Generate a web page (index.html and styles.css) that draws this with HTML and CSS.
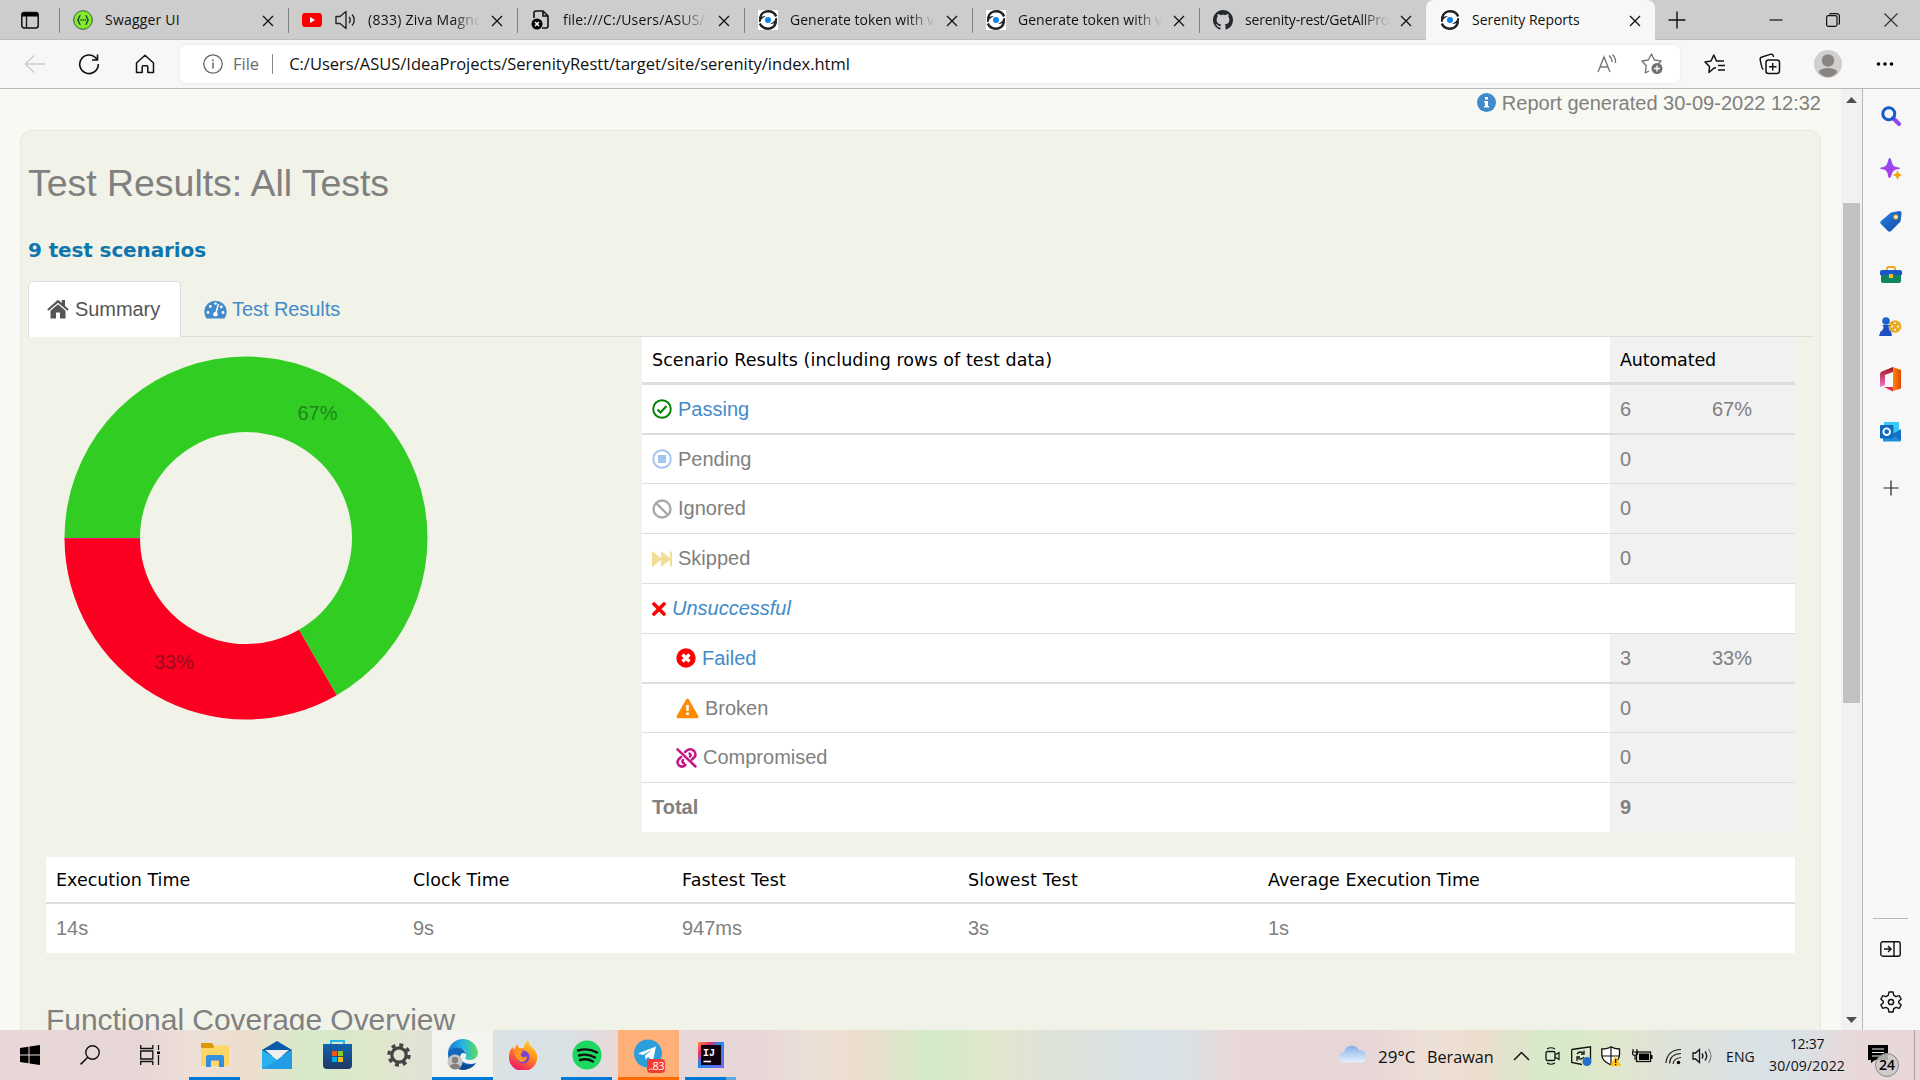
FILE: index.html
```html
<!DOCTYPE html>
<html lang="en">
<head>
<meta charset="utf-8">
<title>Serenity Reports</title>
<link rel="stylesheet" href="styles.css">
</head>
<body>
<svg class="defs" width="0" height="0">
  <defs>
    <symbol id="close" viewBox="0 0 12 12"><path d="M1 1L11 11M11 1L1 11" fill="none" stroke="#111" stroke-width="1.3"/></symbol>
    <symbol id="serenity" viewBox="0 0 20 20"><path d="M0 0H20V20H0Z" fill="#fff"/><path d="M2 8C3 3 7 1.3 10 1.3C14 1.3 16.800 3.300 18.200 6.500" fill="none" stroke="#222" stroke-width="2.500"/><path d="M18 12C17 17 13 18.700 10 18.700C6 18.700 3.200 16.700 1.800 13.500" fill="none" stroke="#222" stroke-width="2.500"/><path d="M1 12V8.500C3 6.300 6 6 8 6.200L4.500 8.300C3.500 9 3 10.500 2.500 12ZM19 8V11.500C17 13.700 14 14 12 13.800L15.500 11.700C16.500 11 17 9.500 17.500 8Z" fill="#222"/><circle cx="10" cy="10" r="3" fill="#0a84e8"/></symbol>
    <linearGradient id="blue" x2="1" y2="1"><stop stop-color="#2385e2"/><stop offset="1" stop-color="#1749a8"/></linearGradient>
    <linearGradient id="violet" x2="0" y2="1"><stop stop-color="#8b4df5"/><stop offset="1" stop-color="#b03bea"/></linearGradient>
    <linearGradient id="edge" x2="1" y2="0"><stop stop-color="#1c78d0"/><stop offset=".5" stop-color="#26b7e2"/><stop offset="1" stop-color="#5ddc5a"/></linearGradient>
    <linearGradient id="fox" x1=".8" y1="0" x2=".3" y2="1"><stop stop-color="#ffe135"/><stop offset=".45" stop-color="#ff8a1c"/><stop offset="1" stop-color="#f0116c"/></linearGradient>
    <linearGradient id="store" x2="0" y2="1"><stop stop-color="#1163ad"/><stop offset="1" stop-color="#203868"/></linearGradient>
    <linearGradient id="cloud" x2="0" y2="1"><stop stop-color="#86aee6"/><stop offset="1" stop-color="#e5f2fe"/></linearGradient>
    <linearGradient id="ij" x2="1" y2="1"><stop stop-color="#ff8a3c"/><stop offset=".25" stop-color="#ee2a6e"/><stop offset=".45" stop-color="#1a8df0"/><stop offset="1" stop-color="#7a63f2"/></linearGradient>
    <linearGradient id="office" x2="1" y2="0"><stop stop-color="#ff8a00"/><stop offset="1" stop-color="#e04400"/></linearGradient>
    <linearGradient id="officeleft" x2="0" y2="1"><stop stop-color="#a50f1c"/><stop offset="1" stop-color="#f07ad0"/></linearGradient>
  </defs>
</svg>

<header class="tabbar">
  <div class="tab-actions"><svg width="20" height="20" viewBox="0 0 20 20"><rect x="1.800" y="2.500" width="16.400" height="15.500" rx="2.500" fill="none" stroke="#111" stroke-width="1.500"/><path d="M2 3H18V6.500H2Z"/><path d="M6.500 6V18" stroke="#111" stroke-width="1.300"/></svg></div>
  <div class="tab"><svg class="fav" viewBox="0 0 20 20"><circle cx="10" cy="10" r="9.300" fill="#85ea2d" stroke="#355c3a"/><path d="M7.500 5.500C5.500 5.500 6.500 9.500 4.500 10C6.500 10.500 5.500 14.500 7.500 14.500M12.500 5.500C14.500 5.500 13.500 9.500 15.500 10C13.500 10.500 14.500 14.500 12.500 14.500" fill="none" stroke="#173647" stroke-width="1.300"/><path d="M7.500 10H13" stroke="#173647" stroke-width="1.500" stroke-dasharray="1.300 .8"/></svg><span class="tab-title t-swagger">Swagger UI</span><svg class="x"><use href="#close"/></svg></div>
  <div class="tab"><svg class="fav" viewBox="0 0 20 20"><rect y="3" width="20" height="14" rx="3" fill="#f00"/><path d="M8 7L13 10L8 13Z" fill="#fff"/></svg><svg class="speaker" width="21" height="20" viewBox="0 0 21 20"><path d="M1 6.500H5L11 1.500V18.500L5 13.500H1ZM14 7C15.500 8.800 15.500 11.200 14 13M17 4.500C20 7.500 20 12.500 17 15.500" fill="none" stroke="#222" stroke-width="1.400" stroke-linejoin="round"/></svg><span class="tab-title fade t-video">(833) Ziva Magno</span><svg class="x"><use href="#close"/></svg></div>
  <div class="tab"><svg class="fav" viewBox="0 0 20 20"><path d="M3 8V3Q3 1 5 1H12L17 6V16Q17 18 15 18H11M12 1V6H17" fill="none" stroke="#111" stroke-width="1.600"/><circle cx="6" cy="14" r="5.500"/><path d="M4 12L8 16M8 12L4 16" stroke="#fff" stroke-width="1.500"/></svg><span class="tab-title fade t-file">file:///C:/Users/ASUS/I</span><svg class="x"><use href="#close"/></svg></div>
  <div class="tab"><svg class="fav"><use href="#serenity"/></svg><span class="tab-title fade">Generate token with v</span><svg class="x"><use href="#close"/></svg></div>
  <div class="tab"><svg class="fav"><use href="#serenity"/></svg><span class="tab-title fade">Generate token with v</span><svg class="x"><use href="#close"/></svg></div>
  <div class="tab"><svg class="fav" viewBox="0 0 16 16"><path fill="#24292f" d="M8 0C3.580 0 0 3.580 0 8c0 3.540 2.290 6.530 5.470 7.590.4.070.55-.17.55-.38 0-.19-.01-.82-.01-1.490-2.010.37-2.530-.49-2.690-.94-.09-.23-.48-.94-.82-1.130-.28-.15-.68-.52-.01-.53.63-.01 1.080.58 1.230.82.72 1.210 1.870.87 2.330.66.070-.52.28-.87.51-1.070-1.780-.2-3.640-.89-3.640-3.950 0-.87.31-1.590.82-2.150-.08-.2-.36-1.020.08-2.120 0 0 .67-.21 2.200.82.64-.18 1.320-.27 2-.27s1.360.09 2 .27c1.530-1.040 2.200-.82 2.200-.82.44 1.100.16 1.920.08 2.120.51.56.82 1.270.82 2.150 0 3.070-1.870 3.750-3.650 3.950.29.25.54.73.54 1.480 0 1.070-.01 1.930-.01 2.200 0 .21.15.46.55.38A8.010 8.010 0 0 0 16 8c0-4.420-3.580-8-8-8Z"/></svg><span class="tab-title fade t-github">serenity-rest/GetAllPro</span><svg class="x"><use href="#close"/></svg></div>
  <div class="tab active"><svg class="fav"><use href="#serenity"/></svg><span class="tab-title">Serenity Reports</span><svg class="x"><use href="#close"/></svg></div>
  <div class="window-buttons">
    <svg width="18" height="18" viewBox="0 0 18 18"><path d="M9 .5V17.500M.5 9H17.500" stroke="#111" stroke-width="1.400"/></svg>
    <svg width="14" height="14" viewBox="0 0 14 14"><path d="M.5 7H13.500" stroke="#111" stroke-width="1.200"/></svg>
    <svg width="14" height="14" viewBox="0 0 14 14"><path d="M3.500 1.500Q4 .6 5 .6H10.500Q13.400 .6 13.400 3.500V10Q13.400 11 12.500 11.500" fill="none" stroke="#111" stroke-width="1.200"/><rect x=".6" y="2.600" width="10.400" height="10.800" rx="1.800" fill="none" stroke="#111" stroke-width="1.200"/></svg>
    <svg width="14" height="14" viewBox="0 0 14 14"><path d="M.5 .5L13.500 13.500M13.500 .5L.5 13.500" stroke="#333" stroke-width="1.200"/></svg>
  </div>
</header>

<nav class="toolbar">
  <svg class="tb-back" width="22" height="20" viewBox="0 0 22 20"><path d="M10 1.500L1.500 10L10 18.500M1.500 10H21" fill="none" stroke="#ccc" stroke-width="1.400"/></svg>
  <svg class="tb-reload" width="22" height="22" viewBox="0 0 22 22"><path d="M19 6.500A9.300 9.300 0 1 0 20.300 11M19.500 1.500V7H14" fill="none" stroke="#111" stroke-width="1.600"/></svg>
  <svg class="tb-home" width="20" height="20" viewBox="0 0 20 20"><path d="M1.500 9L10 1.200L18.500 9V18.500H12.800V13Q12.800 11.800 11.800 11.800H8.200Q7.200 11.800 7.200 13V18.500H1.500Z" fill="none" stroke="#111" stroke-width="1.500" stroke-linejoin="round"/></svg>
  <div class="address">
    <svg width="20" height="20" viewBox="0 0 20 20"><circle cx="10" cy="10" r="9.200" fill="none" stroke="#666" stroke-width="1.300"/><path d="M10 8.500V14.500M10 5.300V7" stroke="#666" stroke-width="1.500"/></svg>
    <span class="scheme">File</span><span class="bar"></span><span class="url">C:/Users/ASUS/IdeaProjects/SerenityRestt/target/site/serenity/index.html</span>
    <svg class="read" width="20" height="20" viewBox="0 0 20 20"><path d="M1 18L7 3L13 18M3.200 13H10.800M12 1.500Q15 4 15 8M15.500 .5Q19 4 18.500 9" fill="none" stroke="#777" stroke-width="1.400"/></svg>
    <svg class="addfav" width="22" height="21" viewBox="0 0 22 21"><path d="M8 18L4.300 20L5.200 12.800L1 8L7.300 7L10.500 1L13.300 7L20 8L17.500 11" fill="none" stroke="#777" stroke-width="1.400" stroke-linejoin="round"/><circle cx="16" cy="15.500" r="5.500" fill="#707070"/><path d="M16 12.500V18.500M13 15.500H19" stroke="#fff" stroke-width="1.300"/></svg>
  </div>
  <div class="tb-right">
    <svg width="22" height="20" viewBox="0 0 22 20"><path d="M12 13.500L9.500 14.500L5 18.500L5.500 12.500L1 8L7 7L9.800 1L12.500 7H20M14 11.500H21M14 16H21" fill="none" stroke="#111" stroke-width="1.500" stroke-linejoin="round"/></svg>
    <svg width="22" height="22" viewBox="0 0 22 22"><path d="M4.500 16.500Q3 15.500 2.800 14L1.200 7Q.8 4.500 3 4L12 1.200Q14.200 .8 14.500 4" fill="none" stroke="#111" stroke-width="1.400"/><rect x="7" y="7" width="13.500" height="13.500" rx="2.500" fill="none" stroke="#111" stroke-width="1.500"/><path d="M13.700 10V17.500M10 13.700H17.500" stroke="#111" stroke-width="1.400"/></svg>
    <svg width="28" height="28" viewBox="0 0 28 28"><circle cx="14" cy="14" r="14" fill="#d2d0ce"/><circle cx="14" cy="10.500" r="6.200" fill="#8a8580"/><path d="M4.500 22Q7 18 14 18T23.500 22Q19.500 27 14 27T4.500 22Z" fill="#8a8580"/></svg>
    <svg width="18" height="6" viewBox="0 0 18 6"><circle cx="2.500" cy="3" r="1.800"/><circle cx="9" cy="3" r="1.800"/><circle cx="15.500" cy="3" r="1.800"/></svg>
  </div>
</nav>

<div class="browser">
  <main class="page">
    <p class="generated"><svg width="19" height="19" viewBox="0 0 19 19"><circle cx="9.500" cy="9.500" r="9.500" fill="#428bca"/><path d="M8 4H11V6.500H8ZM7 8H11V13H12V14.500H7V13H8V9.500H7Z" fill="#fff"/></svg><span>Report generated 30-09-2022 12:32</span></p>
    <section class="card">
      <h2>Test Results: All Tests</h2>
      <h3>9 test scenarios</h3>
      <div class="tabs">
        <a class="on"><svg width="22" height="20" viewBox="0 0 22 20"><path d="M11 .8L14.800 4V1H18V7L21.800 10.200L20.500 11.800L11 3.800L1.500 11.800L.2 10.200Z" fill="#555"/><path d="M11 5.300L18.500 11.700V19.500H13V13.500H9V19.500H3.500V11.700Z" fill="#555"/></svg><span>Summary</span></a>
        <a><svg width="23" height="20" viewBox="0 0 23 20"><path d="M2.500 19.500A11.200 11.200 0 1 1 20.500 19.500Z" fill="#428bca"/><path d="M11.500 15L14.500 5" stroke="#fff" stroke-width="1.500"/><g fill="#fff"><circle cx="11.500" cy="15.300" r="2.300"/><circle cx="4" cy="13.500" r="1.400"/><circle cx="6.300" cy="7.500" r="1.400"/><circle cx="11.500" cy="4.500" r="1.300"/><circle cx="17.300" cy="8" r="1.400"/><circle cx="19" cy="13.500" r="1.400"/></g></svg><span>Test Results</span></a>
      </div>
      <div class="summary">
        <div class="chart">
          <svg width="364" height="364" viewBox="-182 -182 364 364">
            <path d="M-181.500 0A181.500 181.500 0 1 1 90.750 157.180L53 91.800A106 106 0 1 0 -106 0Z" fill="#32cd23"/>
            <path d="M-181.500 0A181.500 181.500 0 0 0 90.750 157.180L53 91.800A106 106 0 0 1 -106 0Z" fill="#fb0020"/>
            <path d="M-181.500 .5H-106" stroke="#f5147d"/>
            <text x="71.500" y="-118" fill="#1f8418">67%</text><text x="-72" y="131" fill="#9b0a1a">33%</text>
          </svg>
        </div>
        <div class="results">
          <div class="row head"><div><span class="wide">Scenario Results (including rows of test data)</span></div><div class="auto"><span class="tight">Automated</span></div></div>
          <div class="row thick"><div><svg width="20" height="20" viewBox="0 0 20 20"><circle cx="10" cy="10" r="8.800" fill="none" stroke="green" stroke-width="1.900"/><path d="M5.500 10.500L8.500 13.500L14.500 7" fill="none" stroke="green" stroke-width="2"/></svg><a>Passing</a></div><div class="auto"><span>6</span><span>67%</span></div></div>
          <div class="row"><div><svg width="20" height="20" viewBox="0 0 20 20"><circle cx="10" cy="10" r="8.800" fill="none" stroke="#a2c4f0" stroke-width="1.900"/><path d="M6 6H14V14H6Z" fill="#a2c4f0"/></svg><span>Pending</span></div><div class="auto"><span>0</span></div></div>
          <div class="row"><div><svg width="20" height="20" viewBox="0 0 20 20"><circle cx="10" cy="10" r="8.500" fill="none" stroke="#a9a9a9" stroke-width="2.400"/><path d="M4 4L16 16" stroke="#a9a9a9" stroke-width="2.400"/></svg><span>Ignored</span></div><div class="auto"><span>0</span></div></div>
          <div class="row"><div><svg width="20" height="20" viewBox="0 0 20 20"><path d="M0 2L9 9V2L18 9V2.500H20V17.500H18V11L9 18V11L0 18Z" fill="#f0de96"/></svg><span>Skipped</span></div><div class="auto"><span>0</span></div></div>
          <div class="row full"><div><svg width="14" height="14" viewBox="0 0 14 14"><path d="M2 2L12 12M12 2L2 12" stroke="red" stroke-width="3.600" stroke-linecap="round"/></svg><a class="em">Unsuccessful</a></div></div>
          <div class="row thick sub"><div><svg width="20" height="20" viewBox="0 0 20 20"><circle cx="10" cy="10" r="9.700" fill="red"/><path d="M6.500 6.500L13.500 13.500M13.500 6.500L6.500 13.500" stroke="#fff" stroke-width="3.200"/></svg><a>Failed</a></div><div class="auto"><span>3</span><span>33%</span></div></div>
          <div class="row sub"><div><svg width="23" height="21" viewBox="0 0 23 21"><path d="M11.500 2L21 18.800H2Z" fill="#ff8c00" stroke="#ff8c00" stroke-width="3" stroke-linejoin="round"/><path d="M10 7H13L12.500 13H10.500ZM10.200 14.500H12.800V17H10.200Z" fill="#fff"/></svg><span>Broken</span></div><div class="auto"><span>0</span></div></div>
          <div class="row sub"><div><svg width="21" height="20" viewBox="0 0 21 20"><g fill="none" stroke="#c71585" stroke-width="2.500" stroke-linecap="round"><path d="M1.500 1.300L19.500 18.500M9 4L11.500 2Q15 .2 18 3Q21 6.500 18 9.500L16 11.500M9.500 17Q6 20 3 17.500Q0 14 3 11L5 9M13.500 5.500Q15.500 6.500 14 8.500M7 12Q5.500 14.500 8 15.300"/></g></svg><span>Compromised</span></div><div class="auto"><span>0</span></div></div>
          <div class="row total"><div>Total</div><div class="auto">9</div></div>
        </div>
      </div>
      <div class="timing">
        <div class="timing-row head"><span>Execution Time</span><span class="wide">Clock Time</span><span class="wider">Fastest Test</span><span class="wider">Slowest Test</span><span>Average Execution Time</span></div>
        <div class="timing-row"><span>14s</span><span>9s</span><span>947ms</span><span>3s</span><span>1s</span></div>
      </div>
      <h4>Functional Coverage Overview</h4>
    </section>
  </main>
  <div class="scroll"><svg width="11" height="6" viewBox="0 0 11 6"><path d="M0 6L5.500 0L11 6Z" fill="#505050"/></svg><div class="thumb"></div><svg width="11" height="6" viewBox="0 0 11 6"><path d="M0 0L5.500 6L11 0Z" fill="#505050"/></svg></div>
  <aside class="sidebar">
    <div><svg width="20" height="20" viewBox="0 0 20 20"><path d="M12 12L18 18" stroke="#9247ee" stroke-width="4" stroke-linecap="round"/><circle cx="7.800" cy="7.800" r="6" fill="none" stroke="#155bcb" stroke-width="3"/></svg></div>
    <div><svg width="22" height="22" viewBox="0 0 22 22"><path d="M9.500 0Q11 0 11.500 3Q12.500 8.500 16 9Q20 9.500 20 10.200T16 11.500Q12.500 12.500 11.500 17Q11 20 9.500 20T8 17Q7 12 3.500 11.500T0 10.200T3.500 9Q7 8 8 3Q8.500 0 9.500 0Z" fill="url(#violet)"/><path d="M17.500 12.500L19 15.500L22 17L19 18.500L17.500 22L16 18.500L12.500 17L16 15.500Z" fill="#f0a80c"/></svg></div>
    <div><svg width="22" height="21" viewBox="0 0 22 21"><path d="M11 1.500L19.500 0Q22 0 21.500 3L20.500 10.500L11 20Q9.500 21.500 8 20L1 13Q-.5 11.500 1 10Z" fill="url(#blue)"/><circle cx="15.800" cy="6" r="1.900" fill="#fff" stroke="#f2b91c" stroke-width="1.200"/></svg></div>
    <div><svg width="22" height="17" viewBox="0 0 22 17"><path d="M7 4V2.500Q7 1 8.500 1H13.500Q15 1 15 2.500V4" fill="none" stroke="#f0aa24" stroke-width="2"/><path d="M1 7H21V15Q21 17 19 17H3Q1 17 1 15Z" fill="#11835f"/><path d="M2 4H20Q22 4 22 6V9H0V6Q0 4 2 4Z" fill="#1b57c5"/><path d="M9 8H13V12H9Z" fill="#f5b92c"/></svg></div>
    <div><svg width="23" height="19" viewBox="0 0 23 19"><circle cx="16" cy="9.500" r="6.300" fill="#e9aa23"/><g fill="#fff"><circle cx="16" cy="6.300" r="1"/><circle cx="13" cy="9.500" r="1"/><circle cx="19" cy="9.500" r="1"/><circle cx="16" cy="12.700" r="1"/></g><circle cx="7" cy="4" r="3.800" fill="#1c62cf"/><path d="M3 8H11L9.500 9.500Q9.500 13 12 14.500L13 19H0L1.500 14.500Q4.500 13 4.500 9.500Z" fill="#1c4fc4"/></svg></div>
    <div><svg width="21" height="25" viewBox="0 0 21 25"><path d="M13 0L21 3V21.500L13 24Z" fill="url(#office)"/><path d="M13 0V5L5 8V18L0 20V7Q0 5 2 4.500Z" fill="url(#officeleft)"/><path d="M4 20H13V24.500Z" fill="#ed2847"/></svg></div>
    <div><svg width="21" height="21" viewBox="0 0 21 21"><path d="M4 1H19V12H4Z" fill="#3acbf5"/><path d="M3 20.500V12H20.500V20.500Z" fill="#1b91dc"/><path d="M21 8V20L12 13.500Z" fill="#1671c2"/><rect y="4" width="13.500" height="13.500" rx="1" fill="#0f6cbd"/><circle cx="6.700" cy="10.700" r="3.300" fill="none" stroke="#fff" stroke-width="1.900"/></svg></div>
    <div class="plus"><svg width="16" height="16" viewBox="0 0 16 16"><path d="M8 .5V15.500M.5 8H15.500" stroke="#222" stroke-width="1.200"/></svg></div>
    <hr>
    <div><svg width="21" height="16" viewBox="0 0 21 16"><rect x=".8" y=".8" width="19.400" height="14.400" rx="2" fill="none" stroke="#111" stroke-width="1.400"/><path d="M14 1V15M4 8H10.500M8 5L11 8L8 11" fill="none" stroke="#111" stroke-width="1.400"/></svg></div>
    <div><svg width="22" height="22" viewBox="0 0 22 22"><path d="M9 1H13L13.800 4.300L16 5.600L19.200 4.600L21.200 8L18.700 10.300V11.700L21.200 14L19.200 17.400L16 16.400L13.800 17.700L13 21H9L8.200 17.700L6 16.400L2.800 17.400L.8 14L3.300 11.700V10.300L.8 8L2.800 4.600L6 5.600L8.200 4.300Z" fill="none" stroke="#111" stroke-width="1.400" stroke-linejoin="round"/><circle cx="11" cy="11" r="2.600" fill="none" stroke="#111" stroke-width="1.500"/></svg></div>
  </aside>
</div>

<footer class="taskbar">
  <div class="task w60"><svg width="20" height="20" viewBox="0 0 20 20"><path d="M0 3L8.500 1.800V9.500H0ZM9.500 1.600L20 0V9.500H9.500ZM0 10.500H8.500V18.200L0 17ZM9.500 10.500H20V20L9.500 18.400Z"/></svg></div>
  <div class="task w60"><svg width="20" height="20" viewBox="0 0 20 20"><circle cx="12.500" cy="7.500" r="6.700" fill="none" stroke="#111" stroke-width="1.400"/><path d="M7.800 12.200L.6 19.400" stroke="#111" stroke-width="1.500"/></svg></div>
  <div class="task w60"><svg width="20" height="20" viewBox="0 0 20 20"><path d="M.7 0V3.500H12.800V0M.7 20V16.500H12.800V20M.7 6H12.800V14H.7ZM18.500 0V5M18.500 10V20" fill="none" stroke="#111" stroke-width="1.300"/><path d="M17 6.500H20V9H17Z"/></svg></div>
  <div class="task explorer run"><svg width="28" height="24" viewBox="0 0 28 24"><path d="M0 0H11L13 3V8H0Z" fill="#dc9a0a"/><path d="M0 5H12L14 2.500H28V23H0Z" fill="#ffd566"/><path d="M5 24V14Q5 12 7 12H21Q23 12 23 14V24H18V17.500H10V24Z" fill="#3390df"/></svg></div>
  <div class="task w61"><svg width="30" height="28" viewBox="0 0 30 28"><path d="M0 9L15 0L30 9V15H0Z" fill="#0a5ba8"/><path d="M0 9L15 18L30 9V28H0Z" fill="#29b2ef"/><path d="M3 9H27L15 19Z" fill="#eee"/><path d="M15 19L30 28H0L30 10V28Z" fill="#1e8ddd" fill-opacity=".55"/></svg></div>
  <div class="task w61"><svg width="29" height="29" viewBox="0 0 29 29"><path d="M8 6V1H21V6" fill="none" stroke="#22b7ee" stroke-width="2"/><path d="M0 4H29V25Q29 29 25 29H4Q0 29 0 25Z" fill="url(#store)"/><path d="M9 11H14V16H9Z" fill="#f1511b"/><path d="M15 11H20V16H15Z" fill="#80cc28"/><path d="M9 17H14V22H9Z" fill="#00adef"/><path d="M15 17H20V22H15Z" fill="#fbbc09"/></svg></div>
  <div class="task w61"><svg width="24" height="24" viewBox="0 0 24 24"><circle cx="12" cy="12" r="7.200" fill="none" stroke="#444" stroke-width="3.200"/><circle cx="12" cy="12" r="10" fill="none" stroke="#444" stroke-width="3.500" stroke-dasharray="3.900 3.954"/></svg></div>
  <div class="task edge run"><svg width="32" height="31" viewBox="0 0 32 31"><path d="M1 16A15 15 0 0 1 31 14Q30 21 23 21Q17 21 19 17Q20 10 13 10Q5 10 1 16Z" fill="url(#edge)"/><path d="M1 14Q4 8 12 9Q18 10 19 15Q14 12 13 18Q14 25 24 25Q27 25 29 24Q24 31 15 31Q1 29 1 14Z" fill="#1168bd"/><path d="M13 17Q12 27 25 26L29 24Q24 31 15 31Q8 28 8 22Q8 17 13 17Z" fill="#0c4c94"/><circle cx="8" cy="23" r="7.500" fill="#c9c7c5"/><circle cx="8" cy="21" r="3.200" fill="#85807c"/><path d="M2.500 27Q8 22 13.500 27Q11 30.500 8 30.500T2.500 27Z" fill="#85807c"/></svg></div>
  <div class="task w61"><svg width="29" height="30" viewBox="0 0 29 30"><path d="M19 0Q20 5 24 8Q29 13 28 19A14 13 0 0 1 0 17Q0 10 4 7L5 10L8 4L10 8H15Q15 3 19 0Z" fill="url(#fox)"/><circle cx="14" cy="17" r="6.500" fill="#7542d8"/><path d="M5 12Q10 8 14 12Q10 14 13 17Q16 18 18 16Q18 22 12 22Q7 20 5 12Z" fill="#ff9522"/></svg></div>
  <div class="task spotify run"><svg width="30" height="30" viewBox="0 0 30 30"><circle cx="15" cy="15" r="14.600" fill="#1ed760"/><path d="M6 10.500Q16 7.500 25 12.500M7 15.500Q15 13 23 17.500M8 20Q15 18 21 21.500" fill="none" stroke="#111" stroke-width="2.400" stroke-linecap="round"/></svg></div>
  <div class="task telegram"><svg width="30" height="32" viewBox="0 0 30 32"><circle cx="14" cy="14.500" r="14" fill="#2b9fdb"/><path d="M4 14.500L22 7.500L19 21.500L14 18L11.500 20.500L11 16.500L18 10.500L9 16Z" fill="#fff"/></svg><b>..83</b></div>
  <div class="task intellij"><svg width="26" height="26" viewBox="0 0 26 26"><path d="M0 0H26V26H0Z" fill="url(#ij)"/><path d="M3 3H23V23H3Z" fill="#10020f"/><path d="M5.500 19.500H13" stroke="#fff" stroke-width="1.600"/><text x="5" y="13.500" class="ijt">IJ</text></svg></div>
  <div class="tray">
    <svg class="i-cloud" width="28" height="18" viewBox="0 0 28 18"><path d="M5 17.500A5 5 0 0 1 5 7.500A8 8 0 0 1 20 5Q27 5 27.500 12Q27 17.500 23 17.500Z" fill="url(#cloud)"/></svg>
    <span class="temp">29°C</span><span class="weather">Berawan</span>
    <svg class="i-up" width="17" height="10" viewBox="0 0 17 10"><path d="M1 9L8.500 1.500L16 9" fill="none" stroke="#111" stroke-width="1.500"/></svg>
    <svg class="i-cam" width="15" height="18" viewBox="0 0 15 18"><rect x="1" y="4.500" width="9" height="9" rx="1.500" fill="none" stroke="#111" stroke-width="1.300"/><path d="M10 8L14 5.500V12.500L10 10M2 2Q6 -.5 10 2M2 16Q6 18.500 10 16" fill="none" stroke="#111" stroke-width="1.200"/></svg>
    <svg class="i-sync" width="21" height="20" viewBox="0 0 21 20"><path d="M.7 3.500L19.500 .8V14M.7 3.500V16.500L11 18.500" fill="none" stroke="#111" stroke-width="1.300"/><path d="M6 8Q8 5 12 6.500M13 4.500V8H10M13 11Q11 14 7 12.500M6 15V11H9" fill="none" stroke="#111" stroke-width="1.300"/><circle cx="16" cy="15.500" r="4.500" fill="#2470c8"/></svg>
    <svg class="i-sh" width="21" height="20" viewBox="0 0 21 20"><path d="M10 .8Q13 3 18.500 3V9Q18 15 10 19Q1 15 .8 9V3Q7 3 10 .8Z" fill="#fff" stroke="#111" stroke-width="1.300"/><path d="M10 1V19M1 10H18.500" stroke="#111" stroke-width="1.200"/><path d="M14.500 10L20.500 20H9Z" fill="#ffc414"/><path d="M14.700 13V17M14.700 18V19.200" stroke="#111" stroke-width="1.300"/></svg>
    <svg class="i-bat" width="21" height="14" viewBox="0 0 21 14"><rect x="4.500" y="3" width="14" height="9.500" fill="none" stroke="#111" stroke-width="1.300"/><path d="M7 4.500H17V11H7ZM18.500 6H20.500V10H18.500Z"/><path d="M1 0V3M5 0V3M.5 3H5.500V5Q3 8 .5 5ZM3 6V10H5" stroke="#111" fill="none" stroke-width="1.200"/></svg>
    <svg class="i-wifi" width="17" height="17" viewBox="0 0 17 17"><g fill="none" stroke="#222" stroke-width="1.200"><path d="M1 15Q2 2 16 1.500M4.500 15.500Q5 6 16 5.500M8 16Q9 10 16 9.500"/></g><circle cx="13.500" cy="14.500" r="1.800"/></svg>
    <svg class="i-vol" width="21" height="16" viewBox="0 0 21 16"><path d="M1 5H3.500L7.500 1.500V14.500L3.500 11H1ZM10 5.500Q12 8 10 10.500M13 3.500Q16.500 8 13 12.500" fill="none" stroke="#111" stroke-width="1.300"/><path d="M16.500 1Q21.500 8 16.500 15" fill="none" stroke="#777" stroke-width="1.100"/></svg>
    <span class="lang">ENG</span>
    <div class="clock"><span>12:37</span><span class="date">30/09/2022</span></div>
    <div class="notice"><svg width="20" height="20" viewBox="0 0 20 20"><path d="M0 0H20V15H7L3 18V15H0Z"/><path d="M4 4H16M4 7.500H16M4 11H12" stroke="#eee" stroke-width="1.200"/></svg><b>24</b></div>
    <div class="peek"></div>
  </div>
</footer>
</body>
</html>
```
FILE: styles.css
```css
* { box-sizing: border-box; }
body { margin: 0; width: 1920px; height: 1080px; overflow: hidden; font-family: "Liberation Sans", Arial, sans-serif; font-size: 20px; color: #808080; display: flex; flex-direction: column; }
svg { display: block; flex: none; }
.defs { position: absolute; }
.tabbar, .toolbar, .taskbar { font-family: "Open Sans", "Noto Sans", sans-serif; color: #111; }

/* Browser tabs */
.tabbar { height: 40px; flex: none; background: #cdcdcd; border-bottom: 1px solid #bcbcbc; display: grid; grid-template-columns: 59px 229px 229px 227px 228px 227px 227px 229px 1fr; }
.tab-actions { padding: 10px 0 0 20px; }
.tab { position: relative; height: 39px; padding: 0 14px; display: flex; align-items: center; }
.tab::before { content: ""; position: absolute; left: 0; top: 8px; width: 1px; height: 25px; background: #808080; }
.tab.active { background: #f7f7f7; border-radius: 8px 8px 0 0; height: 40px; }
.tab.active::before { display: none; }
.fav { width: 20px; height: 20px; }
.speaker { margin-left: 13px; }
.speaker + .tab-title { margin-left: 12px; }
.tab-title { flex: 1; min-width: 0; margin: 0 11px 1px 12px; white-space: nowrap; font-size: 14px; }
.fade { overflow: hidden; -webkit-mask-image: linear-gradient(90deg, #000 calc(100% - 28px), transparent); mask-image: linear-gradient(90deg, #000 calc(100% - 28px), transparent); }
.t-swagger { letter-spacing: .2px; }
.t-video { letter-spacing: .25px; }
.t-file { letter-spacing: .17px; }
.t-github { letter-spacing: -.2px; }
.x { width: 12px; height: 12px; margin-top: 2px; }
.window-buttons { display: flex; align-items: center; padding-left: 13px; }
.window-buttons svg:nth-child(2) { margin-left: 83px; }
.window-buttons svg:nth-child(n+3) { margin-left: 43px; }
.window-buttons svg:last-child { margin-left: 44px; }

/* Address row */
.toolbar { height: 48px; flex: none; background: #f7f7f7; display: flex; align-items: center; padding: 0 0 1px 24px; }
.tb-reload { margin-left: 32px; }
.tb-home { margin-left: 35px; }
.address { margin-left: 25px; width: 1500px; height: 38px; background: #fff; border-radius: 6px; box-shadow: 0 0 3px rgba(0,0,0,.08); padding-left: 23px; display: flex; align-items: center; font-size: 16.5px; white-space: nowrap; }
.scheme { margin-left: 10px; color: #6b6b6b; }
.bar { width: 1px; height: 20px; margin: 0 16px 0 13px; background: #888; }
.read { margin-left: auto; }
.addfav { margin: 0 17px 0 24px; }
.tb-right { flex: 1; display: flex; align-items: center; padding-left: 24px; }
.tb-right svg:nth-child(2), .tb-right svg:nth-child(3) { margin-left: 33px; }
.tb-right svg:nth-child(4) { margin-left: 34px; }

/* Report page */
.browser { height: 942px; flex: none; display: flex; border-top: 1px solid #b8b8b8; }
.page { width: 1841px; height: 941px; overflow: hidden; background: #f8f9f3; padding: 0 20px; }
.generated { margin: 0; height: 41px; display: flex; justify-content: flex-end; padding-top: 3px; line-height: 23px; }
.generated svg { margin: 1px 6px 0 0; }
.card { width: 1801px; height: 920px; background: #f1f2e8; border: 1px solid #e6e7df; border-radius: 12px; padding: 0 7px; }
h2, h3, h4 { margin: 0; white-space: nowrap; }
h2 { font-size: 37.5px; font-weight: 400; line-height: 44px; padding-top: 30px; height: 102px; letter-spacing: -.04px; }
h3 { font: bold 20px/34px "DejaVu Sans", sans-serif; color: #0d76af; height: 48px; letter-spacing: -.12px; }
.tabs { width: 1786px; height: 56px; display: flex; border-bottom: 1px solid #ddd; line-height: 54px; letter-spacing: -.07px; }
.tabs a { display: flex; align-items: center; padding-left: 20px; color: #428bca; }
.tabs a.on { width: 153px; height: 56px; background: #fff; border: 1px solid #ddd; border-bottom: 0; border-radius: 5px 5px 0 0; padding: 0 0 2px 18px; color: #555; margin-right: 3px; }
.tabs svg { margin-right: 5px; }
.tabs .on svg { margin-right: 6px; }
.summary { display: flex; padding-left: 36px; }
.chart { width: 578px; padding-top: 19px; }
.chart svg { font: 20px "Liberation Sans", Arial, sans-serif; text-anchor: middle; }
.results { width: 1153px; display: grid; grid-template-rows: 48px 50px 49px 50px 50px 50px 50px 49px 50px 49px; }
.row { display: grid; grid-template-columns: 968px 185px; border-bottom: 1px solid #ddd; background: #fff; }
.row > div { display: flex; align-items: center; padding-left: 10px; }
.row > div > svg { margin-right: 6px; }
.row .auto { background: #f1f1f1; padding-left: 10px; }
.auto span:first-child { width: 92px; }
.row a { color: #428bca; }
.head { font-family: "DejaVu Sans", sans-serif; font-size: 17.5px; color: #000; white-space: nowrap; }
.wide { letter-spacing: .07px; }
.wider { letter-spacing: .18px; }
.tight { letter-spacing: -.12px; }
.row.head { border-bottom-width: 3px; }
.row.thick { border-bottom-width: 2px; }
.row.full { grid-template-columns: 1fr; }
.row.sub > div:first-child { padding-left: 34px; }
.row .em { font-style: italic; }
.row.total { font-weight: 700; border-bottom: 0; }
.timing { margin: 25px 0 0 18px; width: 1749px; background: #fff; }
.timing-row { display: grid; grid-template-columns: 357px 269px 286px 300px 1fr; height: 49px; align-items: center; padding-left: 10px; }
.timing-row.head { height: 47px; border-bottom: 2px solid #ddd; }
h4 { font-size: 30px; font-weight: 400; line-height: 36px; margin: 49px 0 0 18px; letter-spacing: -.04px; }

/* Scrollbar and side panel */
.scroll { width: 21px; background: #f1f1f1; display: flex; flex-direction: column; align-items: center; padding: 8px 0 7px; }
.thumb { width: 17px; height: 500px; background: #c1c1c1; margin-top: 100px; }
.scroll svg:last-child { margin-top: auto; }
.sidebar { width: 58px; background: #f7f7f7; border-left: 1px solid #b8b8b8; display: flex; flex-direction: column; align-items: center; padding: 1px 2px 0 0; }
.sidebar div { height: 52.600px; display: flex; align-items: center; flex: none; }
.sidebar .plus { margin-top: 4px; }
.sidebar hr { width: 35px; border: 0; height: 1px; background: #b8b8b8; margin: auto 0 4px; }
.sidebar::after { content: ""; height: 2px; }

/* Desktop taskbar */
.taskbar { height: 50px; flex: none; display: flex; background: linear-gradient(90deg, #e8d8d8 0, #e6d6d7 22%, #ede0d6 32%, #ecdecd 40%, #d5ebcb 51%, #dce8ca 58%, #e0e7cb 60%, #dfe3d8 70%, #d9e2e6 85%, #dae1e5 92%, #e8d8d9 100%) 0 0 / 617px 100%; }
.task { position: relative; display: flex; align-items: center; justify-content: center; padding-bottom: 1px; }
.w60 { width: 60px; }
.w61 { width: 61px; }
.run::after { content: ""; position: absolute; left: 0; right: 0; bottom: 0; height: 3px; background: #0078d7; }
.explorer { width: 51px; margin: 0 6px 0 9px; }
.edge { width: 61px; margin-left: 3px; background: #f3f3ef; }
.spotify { width: 51px; margin: 0 6px 0 7px; }
.telegram { width: 61px; background: #ffaf78; border-bottom: 3px solid #ff6a00; padding: 2px 0 0; }
.telegram b { position: absolute; left: 29px; bottom: 4px; width: 18px; height: 14px; border-radius: 4px; background: #f23c34; color: #fff; font: 11px/14px "Open Sans", sans-serif; letter-spacing: -.7px; text-align: center; }
.intellij { width: 51px; margin-left: 6px; }
.intellij::after { content: ""; position: absolute; inset: auto 0 0; height: 3px; background: linear-gradient(90deg, #0078d7 41px, #62a9e3 41px); }
.ijt { font: bold 10px "Liberation Mono", monospace; fill: #fff; }
.tray { flex: 1; display: flex; align-items: center; padding: 2px 0 0 603px; font-size: 17px; white-space: nowrap; }
.i-cloud { margin-bottom: 4px; }
.temp { margin: 1px 12px 0 11px; width: 37px; }
.weather { width: 66px; margin-top: 1px; font-size: 16.2px; }
.i-up { margin-left: 20px; }
.i-cam { margin-left: 15px; }
.i-sync { margin-left: 11px; }
.i-sh { margin-left: 9px; }
.i-bat { margin-left: 10px; }
.i-wifi { margin-left: 12px; }
.i-vol { margin-left: 10px; }
.lang { width: 29px; margin-left: 13px; font-size: 14px; letter-spacing: .1px; }
.clock { width: 76px; margin: 0 0 2px 14px; display: flex; flex-direction: column; align-items: center; font-size: 14px; line-height: 22px; }
.clock span:first-child { letter-spacing: -.3px; }
.date { letter-spacing: .17px; }
.notice { position: relative; margin: 0 0 2px 23px; }
.notice b { position: absolute; left: 7px; top: 8px; width: 24px; height: 24px; border-radius: 50%; border: 1px solid #888; background: rgba(205,200,200,.85); color: #000; font: 600 14px/21px "Open Sans", sans-serif; text-align: center; }
.peek { margin: 0 0 2px 26px; width: 5px; height: 50px; border-left: 1px solid #a8a0a0; }
```
